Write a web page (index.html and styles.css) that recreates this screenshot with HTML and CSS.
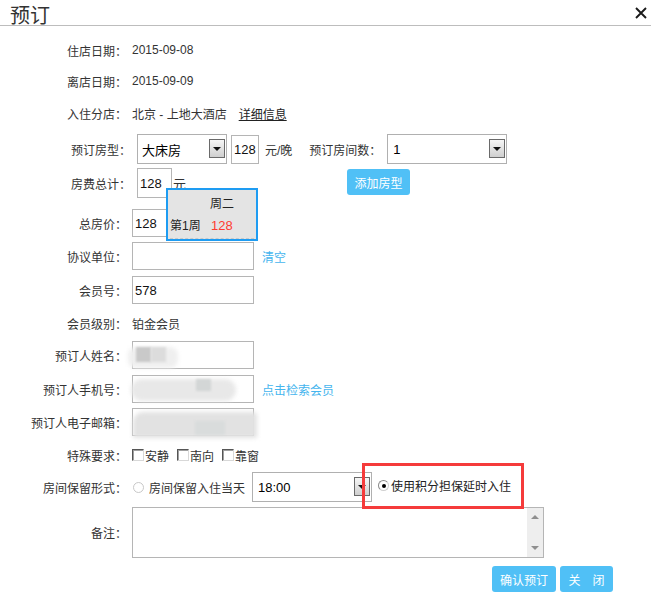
FILE: index.html
```html
<!DOCTYPE html>
<html lang="zh-CN">
<head>
<meta charset="utf-8">
<title>预订</title>
<link rel="stylesheet" href="styles.css">
</head>
<body>
<div class="dialog">
  <div class="header">
    <span class="title">预订</span>
    <svg class="close" width="14" height="14" viewBox="0 0 14 14"><path d="M2 2L12 12M12 2L2 12" stroke="#1a1a1a" stroke-width="1.9" fill="none"/></svg>
  </div>
  <div class="form">
    <div class="row r1"><span class="lbl">住店日期：</span><span class="val">2015-09-08</span></div>
    <div class="row r2"><span class="lbl">离店日期：</span><span class="val">2015-09-09</span></div>
    <div class="row r3"><span class="lbl">入住分店：</span><span class="val">北京 - 上地大酒店</span><a class="detail">详细信息</a></div>
    <div class="row r4">
      <span class="lbl lbl-wide">预订房型：</span>
      <div class="sel sel-type"><span class="sel-text">大床房</span><span class="sel-btn"></span></div>
      <div class="inp inp-price">128</div>
      <span class="unit">元/晚</span>
      <span class="lbl-inline">预订房间数：</span>
      <div class="sel sel-count"><span class="sel-text">1</span><span class="sel-btn"></span></div>
    </div>
    <div class="row r5">
      <span class="lbl lbl-wide">房费总计：</span>
      <div class="inp inp-total">128</div>
      <span class="unit-yuan">元</span>
      <button class="btn btn-add">添加房型</button>
      <div class="popup">
        <div class="pop-head">周二</div>
        <div class="pop-row"><span class="pop-week">第1周</span><span class="pop-price">128</span></div>
        <div class="pop-dash"></div>
      </div>
    </div>
    <div class="row r6"><span class="lbl">总房价：</span><div class="inp inp-std">128</div></div>
    <div class="row r7"><span class="lbl">协议单位：</span><div class="inp inp-std"></div><a class="link">清空</a></div>
    <div class="row r8"><span class="lbl">会员号：</span><div class="inp inp-std">578</div></div>
    <div class="row r9"><span class="lbl">会员级别：</span><span class="val">铂金会员</span></div>
    <div class="row r10"><span class="lbl">预订人姓名：</span>
      <div class="inp inp-std masked">
        <div class="blob blob-name"></div>
        <div class="sq sq-n1"></div><div class="sq sq-n2"></div>
      </div>
    </div>
    <div class="row r11"><span class="lbl">预订人手机号：</span>
      <div class="inp inp-std masked">
        <div class="blob blob-phone"></div>
        <div class="sq sq-p1"></div>
      </div>
      <a class="link">点击检索会员</a>
    </div>
    <div class="row r12"><span class="lbl">预订人电子邮箱：</span>
      <div class="inp inp-std masked">
        <div class="blob blob-mail"></div>
        <div class="sq sq-m1"></div>
      </div>
    </div>
    <div class="row r13"><span class="lbl">特殊要求：</span>
      <span class="chk"></span><span class="chk-text">安静</span>
      <span class="chk"></span><span class="chk-text">南向</span>
      <span class="chk"></span><span class="chk-text">靠窗</span>
    </div>
    <div class="row r14"><span class="lbl">房间保留形式：</span>
      <span class="radio"></span><span class="radio-text">房间保留入住当天</span>
      <div class="sel sel-time"><span class="sel-text">18:00</span><span class="sel-btn"></span></div>
      <div class="mark"><span class="radio radio-on"></span><span class="mark-text">使用积分担保延时入住</span></div>
    </div>
    <div class="row r15"><span class="lbl">备注：</span>
      <div class="textarea"><div class="scroll"><span class="tri-up"></span><span class="tri-down"></span></div></div>
    </div>
    <div class="row r16">
      <button class="btn btn-ok">确认预订</button>
      <button class="btn btn-close">关　闭</button>
    </div>
  </div>
</div>
</body>
</html>
```

FILE: styles.css
```css
* { box-sizing: border-box; }
body {
  margin: 0;
  background: #fff;
  font-family: "Liberation Sans", "Noto Sans CJK SC", sans-serif;
  font-size: 12px;
  color: #333;
}
.header {
  height: 26px;
  border-bottom: 1px solid #bdbdbd;
  display: flex;
  align-items: flex-start;
  justify-content: space-between;
  padding: 0 3px 0 10px;
}
.title {
  font-family: "Noto Sans CJK SC", sans-serif;
  font-size: 20px;
  line-height: 29px;
  height: 25px;
  color: #333;
}
.close { display: block; margin-top: 6px; }
.form { padding-top: 9px; }
.row {
  display: flex;
  align-items: center;
  height: 28px;
  margin-top: 6px;
  white-space: nowrap;
}
.r1 { height: 30px; margin-top: 0; }
.r2 { height: 30px; margin-top: 1px; }
.r3 { height: 30px; margin-top: 2px; }
.r4 { height: 30px; margin-top: 6px; }
.r5 { height: 30px; margin-top: 4px; position: relative; }
.r6 { margin-top: 11px; }
.r7 { margin-top: 5px; }
.r8 { margin-top: 6px; }
.r9 { margin-top: 5px; }
.r10 { margin-top: 4px; }
.r11 { margin-top: 6px; }
.r12 { margin-top: 5px; }
.r13 { height: 26px; margin-top: 6px; }
.r14 { height: 30px; margin-top: 4px; }
.r15 { height: 51px; margin-top: 5px; }
.r16 { height: 26px; margin-top: 8px; padding-left: 492px; }

.lbl {
  width: 127px;
  margin-right: 5px;
  text-align: right;
  flex-shrink: 0;
  color: #333;
}
.lbl-wide { width: 131px; margin-right: 6px; }
.val { color: #333; }
.detail {
  margin-left: 12px;
  color: #222;
  text-decoration: underline;
}
.link { margin-left: 8px; color: #45b5ee; }

.inp {
  height: 28px;
  border: 1px solid #b5b5b5;
  background: #fff;
  padding-left: 2px;
  font-size: 13px;
  color: #111;
  display: flex;
  align-items: center;
  flex-shrink: 0;
}
.inp-std { width: 122px; }
.inp-price { width: 28px; height: 29px; margin-left: 4px; }
.inp-total { width: 35px; height: 30px; }
.unit { margin-left: 6px; }
.unit-yuan { margin-left: 1px; font-size: 13px; }
.lbl-inline { margin-left: 17px; margin-right: 6px; }

.sel {
  position: relative;
  height: 30px;
  border: 1px solid #b0b0b0;
  background: #fff;
  display: flex;
  align-items: center;
  flex-shrink: 0;
  font-size: 13px;
  color: #000;
}
.sel-text { padding-left: 4px; }
.sel-type { width: 90px; }
.sel-count { width: 120px; }
.sel-count .sel-text { padding-left: 5px; }
.sel-time { width: 120px; margin-left: 7px; }
.sel-time .sel-text { padding-left: 5px; }
.sel-btn {
  position: absolute;
  right: 1px;
  top: 4px;
  width: 16px;
  height: 19px;
  border: 1px solid #6a6a6a;
  background: linear-gradient(#f6f6f6, #cfcfcf);
}
.sel-btn::after {
  content: "";
  position: absolute;
  left: 3px;
  top: 7px;
  border-left: 4px solid transparent;
  border-right: 4px solid transparent;
  border-top: 4px solid #111;
}

.btn {
  border: 0;
  border-radius: 3px;
  background: #50c0f6;
  color: #fff;
  font-family: "Liberation Sans", "Noto Sans CJK SC", sans-serif;
  font-size: 12px;
  height: 26px;
  padding: 0;
  flex-shrink: 0;
}
.btn-add { width: 63px; height: 26px; margin-left: 161px; margin-top: -2px; }
.btn-ok { width: 64px; }
.btn-close { width: 53px; margin-left: 4px; }

.popup {
  position: absolute;
  left: 166px;
  top: 20px;
  width: 92px;
  height: 53px;
  border: 2px solid #1e9cf2;
  background: #e4e4e4;
  z-index: 2;
  font-size: 12px;
  color: #222;
}
.pop-head { padding-left: 42px; margin-top: 6px; line-height: 16px; }
.pop-row { display: flex; margin-top: 6px; padding-left: 2px; line-height: 16px; }
.pop-week { width: 41px; }
.pop-price { color: #ff3b30; font-size: 13px; }
.pop-dash {
  margin: 4px 0 0 2px;
  width: 84px;
  border-top: 1px dashed #c8c8c8;
}

.masked { position: relative; overflow: visible; }
.blob { position: absolute; filter: blur(2px); border-radius: 8px; }
.blob-name { left: -5px; top: 5px; width: 50px; height: 21px; background: #efefef; }
.blob-phone { left: -2px; top: 3px; width: 105px; height: 22px; background: #e8e8e8; border-radius: 11px; }
.blob-mail { left: 0; top: 3px; width: 124px; height: 26px; background: #e2e2e2; border-radius: 10px 4px 0 0; }
.sq { position: absolute; filter: blur(1px); }
.sq-n1 { left: 3px; top: 5px; width: 15px; height: 15px; background: #c9c9c9; }
.sq-n2 { left: 18px; top: 5px; width: 15px; height: 15px; background: #dcdcdc; }
.sq-p1 { left: 63px; top: 3px; width: 15px; height: 12px; background: #d3d6d6; }
.sq-m1 { left: 62px; top: 12px; width: 30px; height: 14px; background: #d9dcdc; }

.chk {
  width: 12px;
  height: 12px;
  border-top: 1px solid #555;
  border-left: 1px solid #555;
  border-right: 1px solid #d8d8d8;
  border-bottom: 1px solid #d8d8d8;
  background: #fff;
  box-shadow: inset 1px 1px 0 #a0a0a0;
  flex-shrink: 0;
}
.chk-text { margin-left: 1px; margin-right: 8px; }
.radio {
  width: 11px;
  height: 11px;
  border-radius: 50%;
  border: 1px solid #c8c8c8;
  background: #fff;
  margin-left: 1px;
  flex-shrink: 0;
  position: relative;
}
.radio-text { margin-left: 5px; }
.radio-on { border-color: #8a8a8a #d0d0d0 #d0d0d0 #8a8a8a; }
.radio-on::after {
  content: "";
  position: absolute;
  left: 2.5px;
  top: 2.5px;
  width: 4px;
  height: 4px;
  border-radius: 50%;
  background: #000;
}
.mark {
  height: 46px;
  width: 162px;
  margin-left: -10px;
  border: 3px solid #f53b3b;
  display: flex;
  align-items: center;
  padding-left: 12px;
  flex-shrink: 0;
  position: relative;
  margin-top: -3px;
}
.mark-text { margin-left: 2px; color: #222; }

.textarea {
  width: 412px;
  height: 51px;
  border: 1px solid #b5b5b5;
  background: #fff;
  display: flex;
  justify-content: flex-end;
}
.scroll {
  width: 16px;
  height: 100%;
  background: #eeeeee;
  position: relative;
}
.tri-up, .tri-down {
  position: absolute;
  left: 4px;
  border-left: 4px solid transparent;
  border-right: 4px solid transparent;
}
.tri-up { top: 7px; border-bottom: 4px solid #8f8f8f; }
.tri-down { bottom: 7px; border-top: 4px solid #8f8f8f; }
```
